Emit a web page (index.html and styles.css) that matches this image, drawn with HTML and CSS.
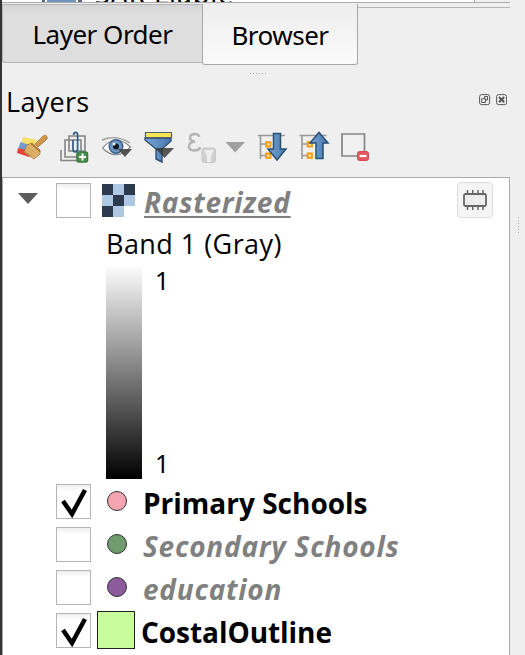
FILE: index.html
```
<!DOCTYPE html>
<html lang="en">
<head>
<meta charset="utf-8">
<title>Layers</title>
<link rel="stylesheet" href="styles.css">
</head>
<body>
<div class="dock">
  <div class="upper-list">
    <svg class="list-icon" width="42" height="2" viewBox="0 0 42 2"><path d="M0 0h3v2H0zM36 0h4v2h-4z" fill="#667"/><path d="M5 0h29v2H5z" fill="#6d94bf"/></svg>
    <span class="list-text">SAR Liable</span>
    <span class="list-end"></span>
  </div>
  <div class="tabs">
    <div class="tab idle"><span>Layer Order</span></div>
    <div class="tab active"><span>Browser</span></div>
    <div class="tab-line"></div>
  </div>
  <div class="splitter"></div>
  <header class="title">
    <h1>Layers</h1>
    <svg width="28" height="12" viewBox="0 0 28 12" fill="none" stroke="#555"><rect x=".6" y=".6" width="10" height="10" rx="2"/><path d="M5.500 4.500V2.500H8.500V6H7M2.700 4.700H6.500V8.500H2.700z"/><rect x="17.600" y=".6" width="10" height="10" rx="2"/><path d="M20 3l5.200 5.200M25.200 3L20 8.200" stroke-width="2"/></svg>
  </header>
  <nav class="tools">
    <svg width="360" height="36" viewBox="10 130 360 36">
      <defs>
        <linearGradient id="blue" x2="1"><stop stop-color="#78a5d5"/><stop offset="1" stop-color="#4677ad"/></linearGradient>
        <linearGradient id="wood" x2="1" y2="1"><stop stop-color="#e8b765"/><stop offset="1" stop-color="#b47a30"/></linearGradient>
      </defs>
      <g>
        <path d="M23 137l14 3-3 6-13-2z" fill="#f4df68"/>
        <path d="M20.500 142l12 4-3 6-11-4z" fill="#6e9bd0"/>
        <path d="M18 148l14 3-3 6-12-4z" fill="#e9413b"/>
        <path d="M35 144l8-8q3-1.500 4 .5t-1 3.500l-8 7z" fill="url(#wood)" stroke="#a46b2a" stroke-width=".7"/>
        <path d="M27 145l5-2 8 7v4l-6 5-10-7z" fill="#deb36b" stroke="#a77437" stroke-width=".8"/>
        <path d="M31 143.500l9 8" stroke="#a66c2c" stroke-width="1.200"/>
        <path d="M26 149l8 7M28 147l8 7M24.500 151l7 5" stroke="#bd8848" stroke-width=".6"/>
      </g>
      <g fill="none" stroke="#858585" stroke-width="1.600">
        <path d="M61 150v10.500h17M65 140h16v17H65zM69 136h16v15H69z"/>
        <path d="M73 140v9q0 3 2.300 3t2.300-3v-14q0-2.700-2-2.700t-2 2.700" stroke="#315b83" stroke-width="1.700"/>
        <rect x="77" y="152" width="10.500" height="10" rx="2" fill="#4b9051" stroke="#397b40"/>
        <path d="M79 157h7M82.500 153.500v7" stroke="#fff" stroke-width="2"/>
      </g>
      <g>
        <path d="M102.500 148q13-15 28-1-14 15-28 1" fill="#fff" stroke="#888" stroke-width="1.200"/>
        <path d="M102 140q14-6 28 3" fill="none" stroke="#999" stroke-width="1.400"/>
        <circle cx="116" cy="146.500" r="6.800" fill="#6d96c3" stroke="#385f8c" stroke-width="1.400"/>
        <circle cx="116" cy="146.500" r="3" fill="#101820"/><circle cx="114" cy="144" r="1.500" fill="#dfedfb"/>
        <path d="M118 149h14l-7 8z" fill="#444" opacity=".9"/>
      </g>
      <g>
        <path d="M145 138h26v3l-9 8v13l-6-3v-10l-11-9z" fill="url(#blue)" stroke="#315071" stroke-width="1.400"/>
        <path d="M145.500 132.500h26v5h-26z" fill="#f7e653" stroke="#526066" stroke-width="1.200"/>
        <path d="M155 148h19l-9.500 10z" fill="#333" opacity=".82"/>
      </g>
      <g fill="none" stroke="#b5b5b5">
        <path d="M199.500 137q-1-3-4.500-3-5 0-5 4 0 3 5 3.500-6 .5-6 5 0 4 5.500 4 4 0 6-3" stroke-width="2.400"/>
        <rect x="202" y="148" width="13.500" height="14.500" rx="2.500" fill="#d0d0d0" stroke="#c8c8c8"/>
        <path d="M204 150h10l-3 6v6h-4v-6z" fill="#eee" stroke="none"/>
      </g>
      <path d="M225.500 142h19.500l-9.800 10.500z" fill="#a0a0a0"/>
      <g id="branch">
        <path d="M258 135.500h27M260.500 136v23M261 144h6M261 155.500h6" fill="none" stroke="#999" stroke-width="1.600"/>
        <path d="M266.200 142.200h4.200v4.200h-4.200zM266.200 153.500h4.200v4.200h-4.200z" fill="#fff2bb" stroke="#f29b15" stroke-width="2"/>
      </g>
      <path d="M273.500 133.500h7V149h5.500L277 160l-9-11h5.500z" fill="url(#blue)" stroke="#2a5074" stroke-width="1.500"/>
      <use href="#branch" x="41.500"/>
      <path d="M316 158.500h7V143h5l-9-10.500-9 10.500h6z" fill="url(#blue)" stroke="#2a5074" stroke-width="1.500"/>
      <path d="M342 134h22.500v22H342z" fill="#f0f0f0" stroke="#858585" stroke-width="1.700"/>
      <rect x="357.500" y="151.500" width="11" height="9" rx="2" fill="#e6565e" stroke="#d84a52"/><path d="M359.500 156h7" stroke="#fff" stroke-width="2.200"/>
    </svg>
  </nav>
  <main class="tree">
    <div class="row first">
      <svg class="arrow" width="20" height="12" viewBox="0 0 20 12"><path d="M0 0h20L10 11z" fill="#5c5c5c"/></svg>
      <span class="box"></span>
      <svg class="raster" width="33" height="33" viewBox="0 0 3 3" shape-rendering="crispEdges"><path d="M0 0h3v3H0z" fill="#aec8e3"/><path d="M0 0h1v1H0zM2 0h1v1H2zM1 1h1v1H1zM0 2h1v1H0z" fill="#2b3a4e"/><path d="M2 2h1v1H2z" fill="#fff"/></svg>
      <span class="name off linked">Rasterized</span>
      <span class="memory"><svg width="26" height="22" viewBox="0 0 26 22" fill="none" stroke="#666"><rect x="2" y="5" width="22" height="12" rx="1.500" fill="#ededed" stroke-width="1.800"/><path d="M5.500 1v4M10.800 1v4M16 1v4M21 1v4M5.500 17v4M10.800 17v4M16 17v4M21 17v4" stroke-width="1.500"/></svg></span>
    </div>
    <div class="band">Band 1 (Gray)</div>
    <div class="legend"><div class="ramp"></div><div class="values"><span>1</span><span>1</span></div></div>
    <div class="row"><span class="box"><svg width="33" height="33" viewBox="0 0 33 33"><path d="M6 16l9 13L28 5" /></svg></span><span class="dot pink"></span><span class="name">Primary Schools</span></div>
    <div class="row"><span class="box"></span><span class="dot green"></span><span class="name off">Secondary Schools</span></div>
    <div class="row"><span class="box"></span><span class="dot purple"></span><span class="name off">education</span></div>
    <div class="row"><span class="box"><svg width="33" height="33" viewBox="0 0 33 33"><path d="M6 16l9 13L28 5" /></svg></span><span class="patch"></span><span class="name coast">CostalOutline</span></div>
  </main>
</div>
<div class="handle"></div>
</body>
</html>
```
FILE: styles.css
```
* { box-sizing: border-box; }
body { margin: 0; width: 525px; height: 655px; overflow: hidden; display: flex; background: #efefef; border-left: 2px solid #343436; color: #000; font-family: "Open Sans", "Noto Sans", sans-serif; }
svg { display: block; flex: none; }
.dock { width: 508px; flex: none; display: flex; flex-direction: column; }
.upper-list { height: 3px; flex: none; display: flex; align-items: flex-start; background: #fff; border-bottom: 1px solid #aaa; overflow: hidden; }
.list-icon { margin-left: 40px; }
.list-text { font: 27px/27px "Noto Sans", sans-serif; letter-spacing: .8px; margin: -20px 0 0 11px; white-space: nowrap; }
.list-end { width: 36px; height: 2px; margin-left: auto; background: #efefef; border-left: 1px solid #aaa; }
.tabs { height: 62px; flex: none; display: flex; align-items: flex-start; padding-top: 1px; }
.tab { display: flex; justify-content: center; font: 26px/36px "Noto Sans", sans-serif; letter-spacing: -.5px; white-space: nowrap; }
.tab.idle { width: 200px; height: 59px; padding-top: 11px; background: linear-gradient(#d4d4d4, #dedede 8px); border: 1px solid #b4b4b4; border-right: 0; border-radius: 0 0 0 3px; }
.tab.active { width: 156px; height: 61px; padding-top: 13px; background: linear-gradient(#eee, #fafafa); border: 1px solid #a8a8a8; border-top: 0; border-radius: 0 0 3px 3px; }
.tab-line { flex: 1; height: 4px; border-bottom: 1px solid #b4b4b4; }
.splitter { height: 1px; width: 17px; flex: none; margin: 8px 0 0 248px; background: repeating-linear-gradient(90deg, #aaa 0 1px, transparent 1px 3px); }
.title { height: 52px; flex: none; display: flex; justify-content: space-between; padding: 9px 3px 0 4px; }
.title h1 { margin: 0; font-size: 27px; font-weight: 400; line-height: 38px; letter-spacing: .3px; }
.title svg { margin-top: 11px; }
.tools { height: 51px; flex: none; padding: 4px 0 0 8px; }
.tree { height: 479px; flex: none; background: #fff; border: 1px solid #aaa; border-bottom: 0; }
.row { height: 43px; display: flex; align-items: center; padding-left: 53px; }
.row.first { height: 44px; padding-left: 15px; }
.arrow { margin: -2px 18px 0 0; }
.box { width: 35px; height: 35px; flex: none; border: 1px solid #b5b5b5; background: linear-gradient(#eee, #fff 6px); }
.box path { fill: none; stroke: #000; stroke-width: 4.5; }
.raster { margin-left: 11px; }
.name { font-size: 28px; line-height: 36px; font-weight: 700; white-space: nowrap; margin: 3px 0 0 16px; }
.off { color: #808080; font-style: italic; letter-spacing: .75px; }
.linked { margin-left: 9px; text-decoration: underline; text-decoration-thickness: 2px; text-underline-offset: 3px; }
.memory { margin: 0 16px 0 auto; width: 36px; height: 36px; display: grid; place-items: center; background: #f5f5f5; border: 1px solid #ddd; border-radius: 4px; }
.band { height: 42px; padding-left: 103px; font-size: 27px; line-height: 43px; letter-spacing: .45px; }
.legend { height: 215px; margin-bottom: 1px; display: flex; padding-left: 103px; }
.ramp { width: 36px; background: linear-gradient(#fff, #000); }
.values { display: flex; flex-direction: column; justify-content: space-between; padding-left: 13px; font: 25px/32px "Noto Sans", sans-serif; }
.dot { width: 20px; height: 20px; flex: none; margin: -2px 0 0 16px; border: 1px solid #333; border-radius: 50%; }
.pink { background: #f3a5b2; }
.green { background: #709b6c; }
.purple { background: #8b5b9b; }
.patch { width: 38px; height: 38px; flex: none; margin: -2px 0 0 6px; border: 1px solid #222; background: #c8fb9c; }
.coast { margin-left: 6px; letter-spacing: -.05px; }
.handle { width: 1px; height: 17px; margin: 217px 0 0 8px; background: repeating-linear-gradient(#aaa 0 1px, transparent 1px 3px); }
```
